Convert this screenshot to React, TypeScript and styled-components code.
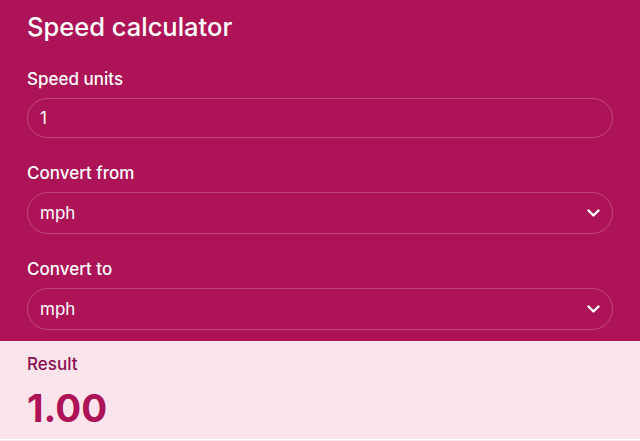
import React, { useState } from 'react';
import styled, { createGlobalStyle } from 'styled-components';

const GlobalStyle = createGlobalStyle`
  * { box-sizing: border-box; }
  body {
    margin: 0;
    font-family: Inter, "Noto Sans", "Liberation Sans", sans-serif;
    background: #fce4ec;
  }
`;

const Pink = '#ad1457';

const Panel = styled.section`
  background: ${Pink};
  color: #fff;
  padding: 11px 27px 11px;
  display: flex;
  flex-direction: column;
`;

const Title = styled.h1`
  margin: 0 0 26px;
  font-size: 25.5px;
  line-height: 32px;
  font-weight: 500;
`;

const Field = styled.div`
  display: flex;
  flex-direction: column;
  gap: 9px;
  & + & {
    margin-top: 25px;
  }
`;

const Label = styled.label`
  font-size: 17px;
  line-height: 20px;
  font-weight: 500;
`;

const controlCss = `
  width: 100%;
  border: 1px solid rgba(255, 255, 255, 0.22);
  border-radius: 999px;
  background: transparent;
  color: #fff;
  font-family: inherit;
  font-size: 17px;
  padding: 0 12px;
  outline: none;
`;

const Input = styled.input`
  ${controlCss}
  height: 40px;
`;

const SelectWrap = styled.div`
  position: relative;
`;

const Select = styled.select`
  ${controlCss}
  height: 42px;
  appearance: none;
  -webkit-appearance: none;
  option { color: #000; }
`;

const Chevron = styled.svg`
  position: absolute;
  right: 13px;
  top: 50%;
  transform: translateY(-50%);
  pointer-events: none;
`;

const Result = styled.section`
  background: #fce4ec;
  padding: 13px 27px 7px;
  border-bottom: 1px solid #fff;
  box-shadow: 0 1px 0 #d9a3b6;
`;

const ResultLabel = styled.div`
  font-size: 17px;
  line-height: 20px;
  font-weight: 500;
  color: #880e4f;
  margin-bottom: 10px;
`;

const ResultValue = styled.div`
  font-size: 38.5px;
  line-height: 48px;
  font-weight: 700;
  color: ${Pink};
`;

const units = ['mph', 'km/h', 'm/s', 'knots'];

const UnitSelect: React.FC<{ id: string; value: string; onChange: (v: string) => void }> = ({ id, value, onChange }) => (
  <SelectWrap>
    <Select id={id} value={value} onChange={(e) => onChange(e.target.value)}>
      {units.map((u) => <option key={u} value={u}>{u}</option>)}
    </Select>
    <Chevron width="13" height="8" viewBox="0 0 13 8" fill="none">
      <path d="M1.5 1.5l5 5 5-5" stroke="#fff" strokeWidth="2.4" strokeLinecap="round" strokeLinejoin="round" />
    </Chevron>
  </SelectWrap>
);

const App: React.FC = () => {
  const [speed, setSpeed] = useState('1');
  const [from, setFrom] = useState('mph');
  const [to, setTo] = useState('mph');

  return (
    <>
      <GlobalStyle />
      <Panel>
        <Title>Speed calculator</Title>
        <Field>
          <Label htmlFor="speed">Speed units</Label>
          <Input id="speed" value={speed} onChange={(e) => setSpeed(e.target.value)} />
        </Field>
        <Field>
          <Label htmlFor="from">Convert from</Label>
          <UnitSelect id="from" value={from} onChange={setFrom} />
        </Field>
        <Field>
          <Label htmlFor="to">Convert to</Label>
          <UnitSelect id="to" value={to} onChange={setTo} />
        </Field>
      </Panel>
      <Result>
        <ResultLabel>Result</ResultLabel>
        <ResultValue>{(parseFloat(speed) || 0).toFixed(2)}</ResultValue>
      </Result>
    </>
  );
};

export default App;
